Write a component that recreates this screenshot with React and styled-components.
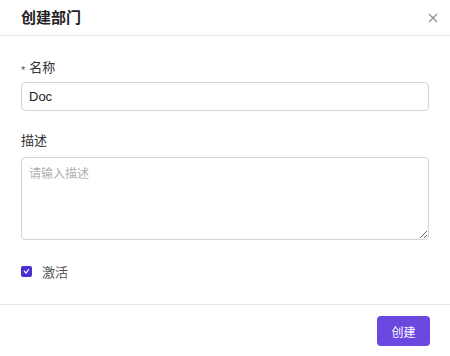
import React from 'react'
import styled, {createGlobalStyle} from 'styled-components'

const Global = createGlobalStyle`
    html, body {
        margin: 0;
        padding: 0;
        background: #ffffff;
    }
    body {
        font-family: "Liberation Sans", "Noto Sans CJK SC", sans-serif;
        color: #333333;
    }
`
const Modal = styled.div`
    width: 450px;
    height: 356px;
    display: flex;
    flex-direction: column;
    background: #ffffff;
`
const Header = styled.div`
    height: 35px;
    flex-shrink: 0;
    display: flex;
    align-items: center;
    justify-content: space-between;
    padding: 0 11px 0 21px;
    border-bottom: 1px solid #e8e8e8;
`
const Title = styled.h2`
    margin: 0;
    font-size: 15px;
    font-weight: 700;
    color: #222222;
    line-height: 20px;
`
const Close = styled.button`
    width: 12px;
    height: 12px;
    padding: 0;
    border: none;
    background: none;
    display: flex;
    align-items: center;
    justify-content: center;
    cursor: pointer;
`
const Body = styled.div`
    flex: 1;
    padding: 23px 21px 0 21px;
    display: flex;
    flex-direction: column;
`
const Field = styled.div`
    display: flex;
    flex-direction: column;
    gap: ${({inner}) => inner}px;
    margin-bottom: ${({gap}) => gap}px;
`
const Label = styled.label`
    font-size: 13px;
    line-height: 18px;
    color: #333333;
    display: flex;
    align-items: center;
`
const Star = styled.span`
    font-size: 11px;
    color: #555555;
    margin-right: 4px;
    position: relative;
    top: 2px;
`
const Input = styled.input`
    box-sizing: border-box;
    width: 100%;
    height: 29px;
    padding: 0 7px;
    border: 1px solid #d4d4d8;
    border-radius: 4px;
    font-family: "Liberation Sans", "Noto Sans CJK SC", sans-serif;
    font-size: 13px;
    color: #222222;
    outline: none;
`
const TextArea = styled.textarea`
    display: block;
    box-sizing: border-box;
    width: 100%;
    height: 83px;
    margin: 0;
    padding: 6px 7px;
    border: 1px solid #d4d4d8;
    border-radius: 4px;
    font-family: "Liberation Sans", "Noto Sans CJK SC", sans-serif;
    font-size: 12px;
    color: #222222;
    outline: none;
    resize: vertical;
    &::placeholder {
        color: #b0b0b0;
    }
`
const CheckRow = styled.label`
    display: flex;
    align-items: center;
    gap: 10px;
    height: 18px;
    font-size: 13px;
    color: #555555;
`
const Box = styled.span`
    width: 11px;
    height: 11px;
    border-radius: 2px;
    background: #4a2fd4;
    display: flex;
    align-items: center;
    justify-content: center;
`
const Footer = styled.div`
    box-sizing: border-box;
    height: 52px;
    flex-shrink: 0;
    border-top: 1px solid #e8e8e8;
    display: flex;
    justify-content: flex-end;
    align-items: flex-start;
    padding: 11px 20px 0 0;
`
const Button = styled.button`
    width: 53px;
    height: 30px;
    border: none;
    border-radius: 4px;
    background: #6b48e0;
    color: #ffffff;
    font-family: "Liberation Sans", "Noto Sans CJK SC", sans-serif;
    font-size: 12px;
    cursor: pointer;
`

function App() {
    return (
        <>
            <Global/>
            <Modal>
                <Header>
                    <Title>创建部门</Title>
                    <Close aria-label='close'>
                        <svg width='10' height='10' viewBox='0 0 10 10'>
                            <path d='M1 1 L9 9 M9 1 L1 9' stroke='#8a8a8a' strokeWidth='1.1' fill='none'/>
                        </svg>
                    </Close>
                </Header>
                <Body>
                    <Field inner={5} gap={21}>
                        <Label><Star>*</Star>名称</Label>
                        <Input defaultValue='Doc'/>
                    </Field>
                    <Field inner={7} gap={22}>
                        <Label>描述</Label>
                        <TextArea placeholder='请输入描述'/>
                    </Field>
                    <CheckRow>
                        <Box>
                            <svg width='7' height='6' viewBox='0 0 7 6'>
                                <path d='M1 3 L3 5 L6 1' stroke='#ffffff' strokeWidth='1.2' fill='none'/>
                            </svg>
                        </Box>
                        激活
                    </CheckRow>
                </Body>
                <Footer>
                    <Button>创建</Button>
                </Footer>
            </Modal>
        </>
    )
}

export default App
